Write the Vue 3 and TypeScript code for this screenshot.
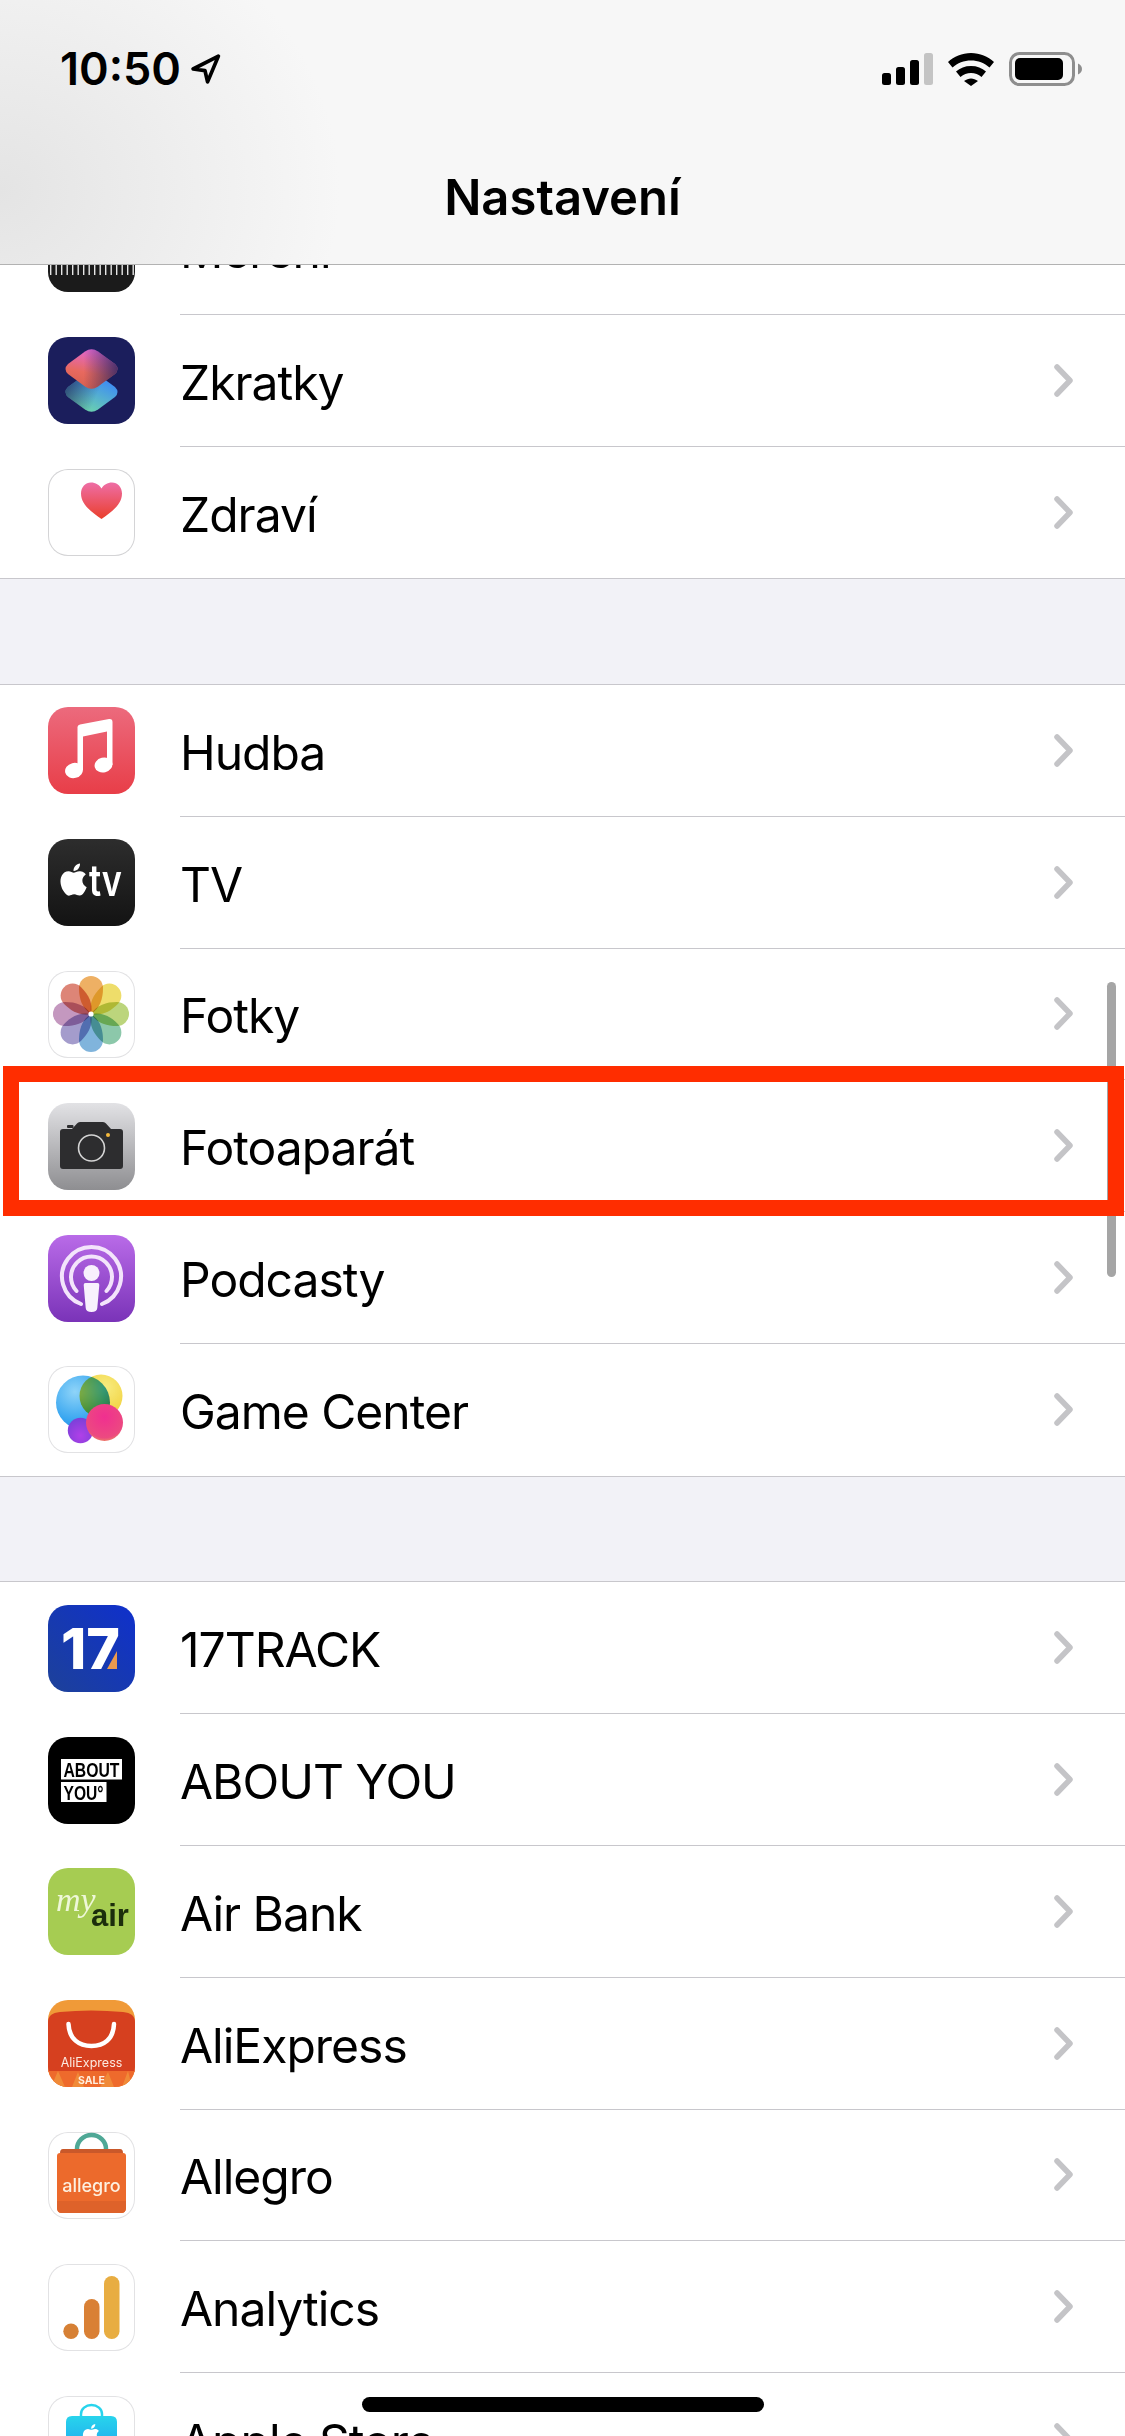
<script setup lang="ts">
interface Row {
  label: string
  icon: string
  highlight?: boolean
}

const groups: Row[][] = [
  [
    { label: 'Měření', icon: 'measure' },
    { label: 'Zkratky', icon: 'shortcuts' },
    { label: 'Zdraví', icon: 'health' },
  ],
  [
    { label: 'Hudba', icon: 'music' },
    { label: 'TV', icon: 'tv' },
    { label: 'Fotky', icon: 'photos' },
    { label: 'Fotoaparát', icon: 'camera', highlight: true },
    { label: 'Podcasty', icon: 'podcasts' },
    { label: 'Game Center', icon: 'gamecenter' },
  ],
  [
    { label: '17TRACK', icon: 'track' },
    { label: 'ABOUT YOU', icon: 'aboutyou' },
    { label: 'Air Bank', icon: 'airbank' },
    { label: 'AliExpress', icon: 'aliexpress' },
    { label: 'Allegro', icon: 'allegro' },
    { label: 'Analytics', icon: 'analytics' },
    { label: 'Apple Store', icon: 'applestore' },
  ],
]

const appleLogo =
  'M12.152 6.896c-.948 0-2.415-1.078-3.96-1.04-2.04.027-3.91 1.183-4.961 3.014-2.117 3.675-.546 9.103 1.519 12.09 1.013 1.454 2.208 3.09 3.792 3.039 1.52-.065 2.09-.987 3.935-.987 1.831 0 2.35.987 3.96.948 1.637-.026 2.676-1.48 3.676-2.948 1.156-1.688 1.636-3.325 1.662-3.415-.039-.013-3.182-1.221-3.22-4.857-.026-3.04 2.48-4.494 2.597-4.559-1.429-2.09-3.623-2.324-4.39-2.376-2-.156-3.675 1.09-4.61 1.09zM15.53 3.83c.843-1.012 1.4-2.427 1.245-3.83-1.207.052-2.662.805-3.532 1.818-.78.896-1.454 2.338-1.273 3.714 1.338.104 2.715-.688 3.559-1.701'

const petals = ['#eeb064', '#eedd6a', '#bcd57c', '#8cc8aa', '#80b4dc', '#a49ccc', '#c498bf', '#dd8577']
const ticks = Array.from({ length: 16 }, (_, i) => 2 + i * 5.5)
</script>

<template>
  <div class="screen">
    <header class="nav">
      <div class="status">
        <div class="clock">
          <span class="time">10:50</span>
          <svg class="arrow" width="31" height="32" viewBox="0 0 30 31">
            <path d="M27.5 3 L3 15.5 L14.5 17 L17 28 Z" fill="none" stroke="#000" stroke-width="3.6" stroke-linejoin="round" />
          </svg>
        </div>
        <div class="indicators">
          <svg width="51" height="32" viewBox="0 0 51 32">
            <rect x="0" y="20" width="9" height="12" rx="2.5" fill="#000" />
            <rect x="14" y="14" width="9" height="18" rx="2.5" fill="#000" />
            <rect x="28" y="7" width="9" height="25" rx="2.5" fill="#000" />
            <rect x="42" y="0" width="9" height="32" rx="2.5" fill="#c4c4c4" />
          </svg>
          <svg width="46" height="33" viewBox="0 0 46 33">
            <path d="M23 0C14 0 6 3.5 0 9L4.5 14.5C9.5 10 16 7.5 23 7.5C30 7.5 36.5 10 41.5 14.5L46 9C40 3.5 32 0 23 0Z" fill="#000" />
            <path d="M23 13C17 13 12 15 8 18.5L12.5 24C15.5 21.5 19 20 23 20C27 20 30.5 21.5 33.5 24L38 18.5C34 15 29 13 23 13Z" fill="#000" />
            <path d="M23 25.5C20.5 25.5 18.5 26.5 16 28L23 33L30 28C27.5 26.5 25.5 25.5 23 25.5Z" fill="#000" />
          </svg>
          <svg width="73" height="34" viewBox="0 0 73 34">
            <rect x="1.5" y="1.5" width="63" height="31" rx="9" fill="none" stroke="#8e8e8e" stroke-width="3" />
            <rect x="6" y="6" width="48" height="22" rx="5" fill="#000" />
            <path d="M69 11.5 C71.5 12.5 73 14.5 73 17 C73 19.5 71.5 21.5 69 22.5 Z" fill="#8e8e8e" />
          </svg>
        </div>
      </div>
      <h1 class="title">Nastavení</h1>
    </header>

    <div class="list">
      <section v-for="(group, g) in groups" :key="g" class="group">
        <div v-for="row in group" :key="row.label" class="row" :class="{ highlight: row.highlight }">
          <div class="icon" :class="`icon-${row.icon}`">
            <svg width="87" height="87" viewBox="0 0 87 87">
              <template v-if="row.icon === 'measure'">
                <rect v-for="x in ticks" :key="x" :x="x" y="58" width="1.4" height="12" fill="#e6e6e6" />
              </template>

              <template v-else-if="row.icon === 'shortcuts'">
                <defs>
                  <linearGradient id="sc-top" x1="0.6" y1="0" x2="0.35" y2="1">
                    <stop offset="0" stop-color="#e268d8" />
                    <stop offset="0.6" stop-color="#e8695f" />
                    <stop offset="1" stop-color="#d8604f" />
                  </linearGradient>
                  <linearGradient id="sc-top-shade" x1="0.35" y1="0.5" x2="1" y2="0.5">
                    <stop offset="0" stop-color="#1b1e5c" stop-opacity="0" />
                    <stop offset="1" stop-color="#1b1e5c" stop-opacity="0.75" />
                  </linearGradient>
                  <linearGradient id="sc-bottom" x1="0.8" y1="0.2" x2="0.3" y2="1">
                    <stop offset="0" stop-color="#3d8bf5" />
                    <stop offset="1" stop-color="#6fd8a8" />
                  </linearGradient>
                  <linearGradient id="sc-bottom-shade" x1="0" y1="0.4" x2="0.6" y2="0.6">
                    <stop offset="0" stop-color="#1b1e5c" stop-opacity="0.7" />
                    <stop offset="1" stop-color="#1b1e5c" stop-opacity="0" />
                  </linearGradient>
                </defs>
                <path d="M37 37.5Q43.5 33 50 37.5L67 50Q72 55 67 60L50 72.5Q43.5 77 37 72.5L20 60Q15 55 20 50Z" fill="url(#sc-bottom)" />
                <path d="M37 37.5Q43.5 33 50 37.5L67 50Q72 55 67 60L50 72.5Q43.5 77 37 72.5L20 60Q15 55 20 50Z" fill="url(#sc-bottom-shade)" />
                <path d="M37 14.5Q43.5 10 50 14.5L67 27Q72 32 67 37L50 49.5Q43.5 54 37 49.5L20 37Q15 32 20 27Z" fill="url(#sc-top)" />
                <path d="M37 14.5Q43.5 10 50 14.5L67 27Q72 32 67 37L50 49.5Q43.5 54 37 49.5L20 37Q15 32 20 27Z" fill="url(#sc-top-shade)" />
              </template>

              <template v-else-if="row.icon === 'health'">
                <defs>
                  <linearGradient id="heart" x1="0" y1="0" x2="0" y2="1">
                    <stop offset="0" stop-color="#ee6ea6" />
                    <stop offset="1" stop-color="#ea3f2c" />
                  </linearGradient>
                </defs>
                <path d="M53.5 50C44 43 33 36 33 24.5C33 18 37.5 13.5 43 13.5C47.5 13.5 51.5 16 53.5 19.5C55.5 16 59.5 13.5 64 13.5C69.5 13.5 74 18 74 24.5C74 36 63 43 53.5 50Z" fill="url(#heart)" />
              </template>

              <template v-else-if="row.icon === 'music'">
                <path d="M29.5 20Q29.5 18 32 17.5L61 12Q64.5 11.5 64.5 15V58H59V24.5L35 29.5V63H29.5Z" fill="#fff" />
                <ellipse cx="26" cy="63.5" rx="9" ry="7.6" transform="rotate(-14 26 63.5)" fill="#fff" />
                <ellipse cx="55.5" cy="58" rx="9" ry="7.4" transform="rotate(-14 55.5 58)" fill="#fff" />
              </template>

              <template v-else-if="row.icon === 'tv'">
                <path :d="appleLogo" transform="translate(9.5 24.5) scale(1.34)" fill="#fff" />
                <text x="41" y="57" class="tv-text" textLength="33" lengthAdjust="spacingAndGlyphs">tv</text>
              </template>

              <template v-else-if="row.icon === 'photos'">
                <g transform="translate(43 43)">
                  <path
                    v-for="(color, i) in petals"
                    :key="color"
                    class="petal"
                    d="M0 0C-9-6-12-15-12-26A12 12 0 0 1 12-26C12-15 9-6 0 0Z"
                    :fill="color"
                    :transform="`rotate(${i * 45})`"
                  />
                  <circle r="2.6" fill="#fff" />
                </g>
              </template>

              <template v-else-if="row.icon === 'camera'">
                <path d="M12 29Q12 26 15 26H24L29 20.5Q30 19 32 19H55Q57 19 58 20.5L63 26H72Q75 26 75 29V63Q75 66 72 66H15Q12 66 12 63Z" fill="#2d2d2f" />
                <rect x="19" y="22" width="6.5" height="3" rx="1" fill="#2d2d2f" />
                <circle cx="43.5" cy="45" r="13" fill="none" stroke="#d4d4d4" stroke-width="1.6" />
                <circle cx="60" cy="32" r="2" fill="#f5b93c" />
              </template>

              <template v-else-if="row.icon === 'podcasts'">
                <g fill="none" stroke="#f3e4fb" stroke-linecap="round">
                  <path d="M33 69A29.5 29.5 0 1 1 54 69" stroke-width="4" />
                  <path d="M28.5 56A20.5 20.5 0 1 1 58.5 56" stroke-width="4" />
                </g>
                <circle cx="43.5" cy="38" r="8" fill="#f8f0fd" />
                <path d="M37.5 48H49.5Q51.5 48 51.3 50L49.3 73Q49 77 43.5 77Q38 77 37.7 73L35.7 50Q35.5 48 37.5 48Z" fill="#f8f0fd" />
              </template>

              <template v-else-if="row.icon === 'gamecenter'">
                <defs>
                  <radialGradient id="gc-blue" cx="0.35" cy="0.3" r="0.8">
                    <stop offset="0" stop-color="#8fd4f8" />
                    <stop offset="0.7" stop-color="#34a4f0" />
                    <stop offset="1" stop-color="#2f7fe0" />
                  </radialGradient>
                  <radialGradient id="gc-yellow" cx="0.6" cy="0.3" r="0.8">
                    <stop offset="0" stop-color="#f8ec80" />
                    <stop offset="1" stop-color="#f0cc30" />
                  </radialGradient>
                  <radialGradient id="gc-pink" cx="0.5" cy="0.35" r="0.75">
                    <stop offset="0" stop-color="#f02f90" />
                    <stop offset="0.75" stop-color="#ec4a80" />
                    <stop offset="1" stop-color="#f0b050" />
                  </radialGradient>
                  <radialGradient id="gc-purple" cx="0.5" cy="0.7" r="0.7">
                    <stop offset="0" stop-color="#b040e8" />
                    <stop offset="1" stop-color="#7a40d8" />
                  </radialGradient>
                </defs>
                <circle cx="35" cy="36.5" r="27" fill="url(#gc-blue)" />
                <circle class="petal" cx="53" cy="30" r="21.5" fill="url(#gc-yellow)" />
                <circle cx="32.5" cy="64.5" r="12.7" fill="url(#gc-purple)" />
                <circle cx="56.5" cy="56.5" r="18.5" fill="url(#gc-pink)" />
              </template>

              <template v-else-if="row.icon === 'track'">
                <text x="13" y="64" class="track-text" textLength="59" lengthAdjust="spacingAndGlyphs">17</text>
                <polygon points="59,64 69,46 69,64" fill="#eb9a4e" />
              </template>

              <template v-else-if="row.icon === 'aboutyou'">
                <rect x="13" y="22" width="61" height="20.5" fill="#fff" />
                <rect x="13" y="45" width="45.5" height="20" fill="#fff" />
                <text x="15.5" y="40" class="about-text" textLength="56" lengthAdjust="spacingAndGlyphs">ABOUT</text>
                <text x="15.5" y="62.5" class="about-text" textLength="40" lengthAdjust="spacingAndGlyphs">YOU°</text>
              </template>

              <template v-else-if="row.icon === 'airbank'">
                <text x="8" y="43" class="my-text">my</text>
                <text x="43" y="58" class="air-text">air</text>
              </template>

              <template v-else-if="row.icon === 'aliexpress'">
                <path d="M0 22Q0 13 12 12Q43 9 75 12Q87 13 87 22V72H0Z" fill="#d6401f" />
                <path d="M0 71H87V87H0Z" fill="#ee6a2c" />
                <path d="M10 71L17 87H3ZM80 71L74 87H84ZM30 72L36 87H24ZM60 72L66 87H52Z" fill="#f08a38" />
                <path d="M20.5 24C21 39 31 46 43.5 46C56 46 65.5 39 66 24" fill="none" stroke="#fff" stroke-width="4.5" stroke-linecap="round" />
                <text x="43.5" y="67" class="ali-text">AliExpress</text>
                <text x="43.5" y="84" class="sale-text">SALE</text>
              </template>

              <template v-else-if="row.icon === 'allegro'">
                <path d="M29 20V17A14.5 14 0 0 1 58 17V20" fill="none" stroke="#4fa896" stroke-width="4.5" />
                <path d="M12 21Q12 17 15 17H72Q75 17 75 21V24H12Z" fill="#c9582a" />
                <path d="M9 24Q9 21 12 21H75Q78 21 78 24V76Q78 81 73 81H14Q9 81 9 76Z" fill="#ec6a2c" />
                <path d="M9 69H78V76Q78 81 73 81H14Q9 81 9 76Z" fill="#de622a" />
                <text x="43.5" y="60" class="allegro-text">allegro</text>
              </template>

              <template v-else-if="row.icon === 'analytics'">
                <rect x="56" y="12" width="15.5" height="63" rx="7.7" fill="#e8ad42" />
                <rect x="36" y="35" width="15.5" height="40" rx="7.7" fill="#d98035" />
                <circle cx="23" cy="67.3" r="7.7" fill="#d68035" />
              </template>

              <template v-else-if="row.icon === 'applestore'">
                <defs>
                  <linearGradient id="store-bag" x1="0" y1="0" x2="0" y2="1">
                    <stop offset="0" stop-color="#28d4ec" />
                    <stop offset="1" stop-color="#1a8cf0" />
                  </linearGradient>
                </defs>
                <path d="M33 21V18A10.5 9 0 0 1 54 18V21" fill="none" stroke="#28d4ec" stroke-width="2.5" />
                <path d="M18 26Q18 20 24 20H63Q69 20 69 26V70Q69 76 63 76H24Q18 76 18 70Z" fill="url(#store-bag)" />
                <path :d="appleLogo" transform="translate(33 28) scale(0.85)" fill="#fff" />
              </template>
            </svg>
          </div>
          <div class="row-body">
            <span class="label">{{ row.label }}</span>
            <svg class="chevron" width="19" height="33" viewBox="0 0 19 33">
              <path d="M3 3L16 16.5L3 30" fill="none" stroke="#c4c4c7" stroke-width="5.5" stroke-linecap="round" stroke-linejoin="round" />
            </svg>
          </div>
        </div>
      </section>
    </div>

    <div class="scrollbar"></div>
    <div class="home-indicator"></div>
  </div>
</template>

<style scoped>
.screen {
  position: relative;
  width: 1125px;
  height: 2436px;
  overflow: hidden;
  background: #f2f2f7;
  font-family: Inter, "Liberation Sans", sans-serif;
  color: #000;
}

.nav {
  position: relative;
  z-index: 2;
  height: 264px;
  border-bottom: 1px solid #b2b2b2;
  background: radial-gradient(ellipse 340px 300px at 0 190px, #e4e4e4, rgba(228, 228, 228, 0)), #f7f7f7;
}

.status {
  display: flex;
  justify-content: space-between;
  align-items: center;
  height: 34px;
  padding: 52px 43px 0 60px;
}

.clock {
  display: flex;
  align-items: center;
  gap: 9px;
}

.time {
  font-size: 45px;
  font-weight: 600;
  line-height: 34px;
}

.indicators {
  display: flex;
  align-items: center;
  gap: 15px;
}

.indicators svg {
  display: block;
}

.title {
  margin: 0;
  padding-top: 88px;
  text-align: center;
  font-size: 49px;
  font-weight: 600;
  line-height: 48px;
}

.list {
  display: flex;
  flex-direction: column;
  gap: 104.6px;
  margin-top: -83px;
}

.group {
  background: #fff;
  border-top: 1px solid #c8c7cc;
  border-bottom: 1px solid #c8c7cc;
}

.row {
  position: relative;
  display: flex;
  align-items: center;
  height: 131.8px;
  padding-left: 48px;
}

.row.highlight::after {
  content: "";
  position: absolute;
  z-index: 3;
  left: 3px;
  right: 1px;
  top: -14px;
  height: 150px;
  box-sizing: border-box;
  border: 16px solid #ff2d00;
}

.row-body {
  flex: 1;
  align-self: stretch;
  display: flex;
  align-items: center;
  justify-content: space-between;
  margin-left: 45px;
  padding-right: 52px;
  border-bottom: 1px solid #c8c7cc;
}

.row:last-child .row-body {
  border-bottom: none;
}

.label {
  font-size: 48px;
  letter-spacing: -1px;
  padding-top: 4px;
}

.chevron {
  display: block;
}

.icon {
  flex: none;
  width: 87px;
  height: 87px;
  border-radius: 20px;
  overflow: hidden;
  background: #fff;
}

.icon svg {
  display: block;
}

.icon-photos,
.icon-gamecenter,
.icon-allegro,
.icon-analytics,
.icon-applestore {
  box-shadow: inset 0 0 0 1px #e2e2e4;
}

.icon-health {
  box-shadow: inset 0 0 0 1px #d4d4d6;
}

.icon-measure {
  background: #1b1b1b;
}

.icon-shortcuts {
  background: #1b1e5c;
}

.icon-music {
  background: linear-gradient(#ec6a7d, #e83e48);
}

.icon-tv {
  background: linear-gradient(#2d2d2d, #131313);
}

.icon-camera {
  background: linear-gradient(#e2e2e5, #8e8e91);
}

.icon-podcasts {
  background: linear-gradient(#b96be8, #7a33b8);
}

.icon-track {
  background: linear-gradient(to bottom left, #0f30cc, #1d4199);
}

.icon-aboutyou {
  background: #000;
}

.icon-airbank {
  background: #a6cc52;
}

.icon-aliexpress {
  background: #f09a38;
}

.petal {
  mix-blend-mode: multiply;
}

.tv-text {
  font-family: Inter, sans-serif;
  font-size: 43px;
  font-weight: 600;
  fill: #fff;
}

.track-text {
  font-family: Inter, sans-serif;
  font-size: 57px;
  font-weight: 800;
  fill: #fff;
}

.about-text {
  font-family: "Liberation Sans", sans-serif;
  font-size: 20px;
  font-weight: 700;
  fill: #000;
}

.my-text {
  font-family: "Liberation Serif", serif;
  font-style: italic;
  font-size: 34px;
  fill: #eef7d8;
}

.air-text {
  font-family: "Liberation Sans", sans-serif;
  font-size: 31px;
  font-weight: 700;
  fill: #1c2e0c;
}

.ali-text {
  font-family: Inter, sans-serif;
  font-size: 12.5px;
  fill: #fbe9e0;
  text-anchor: middle;
}

.sale-text {
  font-family: Inter, sans-serif;
  font-size: 10.5px;
  font-weight: 700;
  fill: #ffeedd;
  text-anchor: middle;
}

.allegro-text {
  font-family: Inter, sans-serif;
  font-size: 18px;
  font-weight: 500;
  fill: #fdf0e0;
  text-anchor: middle;
}

.scrollbar {
  position: absolute;
  z-index: 1;
  left: 1107px;
  top: 982px;
  width: 9px;
  height: 295px;
  border-radius: 5px;
  background: #a5a5a5;
}

.home-indicator {
  position: absolute;
  z-index: 2;
  left: 362px;
  top: 2397px;
  width: 402px;
  height: 15px;
  border-radius: 8px;
  background: #000;
}
</style>

<style>
html,
body {
  margin: 0;
  background: #f2f2f7;
}
</style>
